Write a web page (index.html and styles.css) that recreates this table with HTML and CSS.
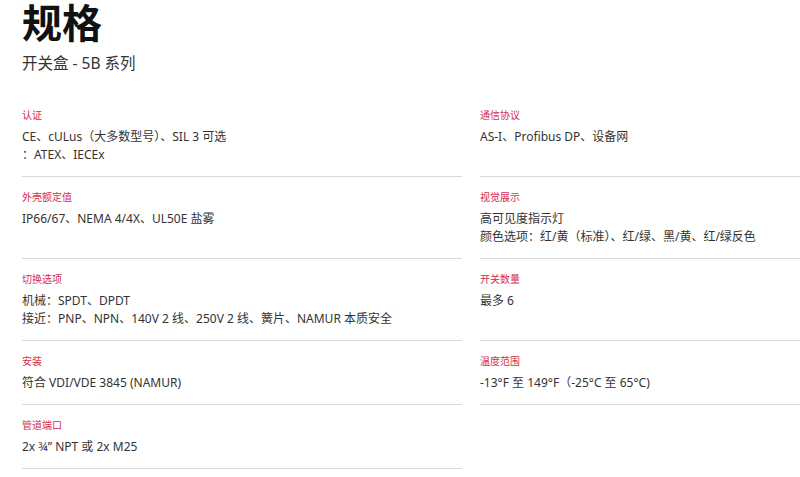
FILE: index.html
```html
<!DOCTYPE html>
<html lang="zh-CN">
<head>
<meta charset="utf-8">
<title>规格</title>
<link rel="stylesheet" href="styles.css">
</head>
<body>
<header class="head">
  <h1 class="title">规格</h1>
  <p class="sub">开关盒 - 5B 系列</p>
</header>
<dl class="specs">
  <div class="item">
    <dt class="label">认证</dt>
    <dd class="value">CE、cULus（大多数型号）、SIL 3 可选<br>：ATEX、IECEx</dd>
  </div>
  <div class="item">
    <dt class="label">通信协议</dt>
    <dd class="value">AS-I、Profibus DP、设备网</dd>
  </div>
  <div class="item">
    <dt class="label">外壳额定值</dt>
    <dd class="value">IP66/67、NEMA 4/4X、UL50E 盐雾</dd>
  </div>
  <div class="item">
    <dt class="label">视觉展示</dt>
    <dd class="value">高可见度指示灯<br>颜色选项：红/黄（标准）、红/绿、黑/黄、红/绿反色</dd>
  </div>
  <div class="item">
    <dt class="label">切换选项</dt>
    <dd class="value">机械：SPDT、DPDT<br>接近：PNP、NPN、140V 2 线、250V 2 线、簧片、NAMUR 本质安全</dd>
  </div>
  <div class="item">
    <dt class="label">开关数量</dt>
    <dd class="value">最多 6</dd>
  </div>
  <div class="item">
    <dt class="label">安装</dt>
    <dd class="value">符合 VDI/VDE 3845 (NAMUR)</dd>
  </div>
  <div class="item">
    <dt class="label">温度范围</dt>
    <dd class="value">-13°F 至 149°F（-25°C 至 65°C)</dd>
  </div>
  <div class="item">
    <dt class="label">管道端口</dt>
    <dd class="value">2x ¾” NPT 或 2x M25</dd>
  </div>
</dl>
</body>
</html>
```
FILE: styles.css
```css
html, body {
  margin: 0;
  padding: 0;
  background: #ffffff;
  overflow: hidden;
}
body {
  padding-left: 22px;
  font-family: "Noto Sans", "Noto Sans CJK SC", sans-serif;
  color: #333333;
}
.title {
  margin: -3px 0 0;
  font-family: "Noto Sans CJK SC", sans-serif;
  font-size: 40px;
  line-height: 48px;
  font-weight: 700;
  color: #111111;
}
.sub {
  margin: 8px 0 0;
  font-size: 15.5px;
  line-height: 20px;
  color: #333333;
}
.specs {
  margin: 22px 0 0;
  display: grid;
  grid-template-columns: 440px 1fr;
  column-gap: 18px;
}
.item {
  padding: 13px 0 12px;
  border-bottom: 1px solid #d9d9d9;
}
.label {
  margin: 0 0 6px;
  font-size: 10px;
  line-height: 14px;
  color: #d42c52;
}
.value {
  margin: 0;
  font-size: 12px;
  line-height: 18px;
  color: #333333;
}
```
